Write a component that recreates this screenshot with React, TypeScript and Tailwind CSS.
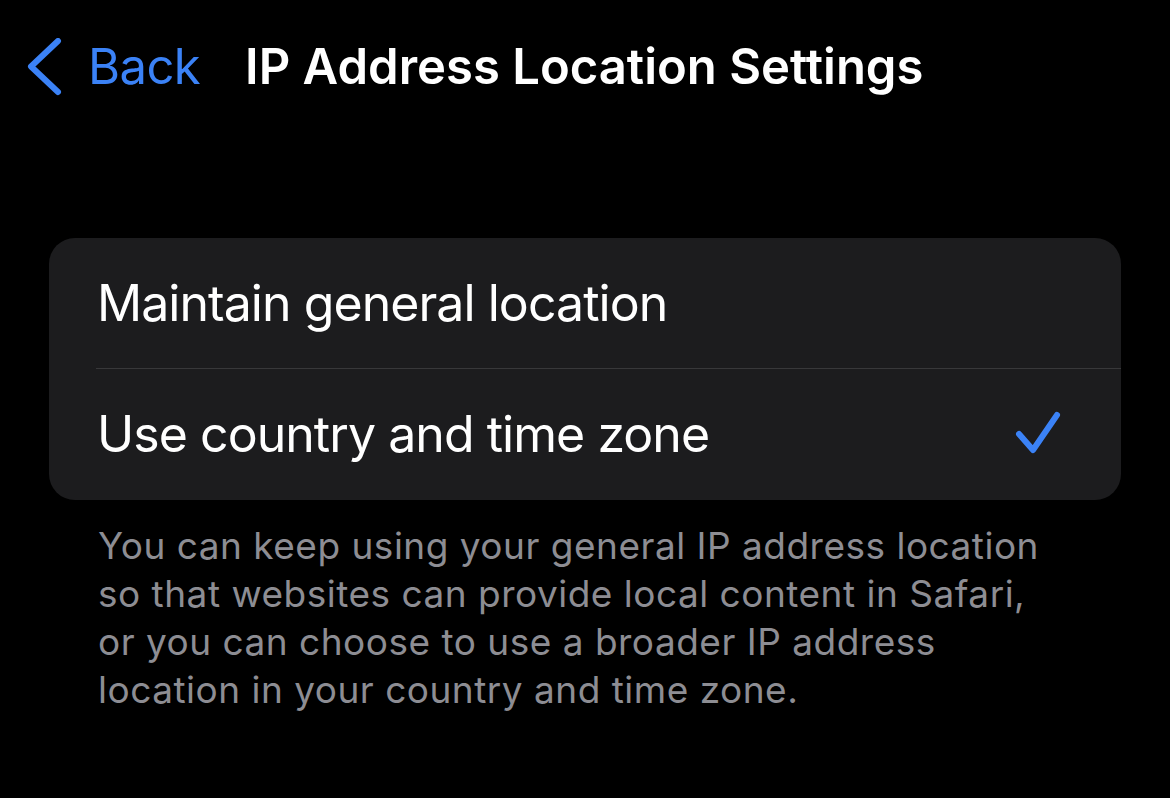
export default function App() {
  return (
    <div
      className="h-[798px] w-[1170px] overflow-hidden bg-black text-white"
      style={{ fontFamily: 'Inter, "Liberation Sans", sans-serif' }}
    >
      <header className="flex h-[134px] items-start pt-[38px]">
        <button type="button" className="ml-[26px] flex items-center text-[#3b82f6]">
          <svg width="36" height="58" viewBox="0 0 36 58" fill="none">
            <path d="M32 3 L5 28.5 L32 54" stroke="currentColor" strokeWidth="6" strokeLinecap="round" strokeLinejoin="round" />
          </svg>
          <span className="ml-[26px] text-[49px] leading-[58px] tracking-[-0.6px]">Back</span>
        </button>
        <h1 className="ml-[45px] text-[49px] font-semibold leading-[58px] tracking-[0px]">
          IP Address Location Settings
        </h1>
      </header>

      <div className="px-[49px] pt-[104px]">
        <div className="overflow-hidden rounded-[26px] bg-[#1c1c1e]">
          <div className="flex h-[130px] items-center pl-[48px] text-[50px] tracking-[-0.95px]">
            Maintain general location
          </div>
          <div className="ml-[47px] h-px bg-[#38383a]" />
          <div className="flex h-[131px] items-center justify-between pl-[48px] pr-[58px] text-[50px] tracking-[-0.95px]">
            <span>Use country and time zone</span>
            <svg width="48" height="48" viewBox="0 0 48 48" fill="none" className="text-[#3b82f6]">
              <path d="M4 23 L18 39 L42 4" stroke="currentColor" strokeWidth="6" strokeLinecap="round" strokeLinejoin="round" />
            </svg>
          </div>
        </div>
        <p className="mt-[22px] pl-[49px] pr-[30px] text-[37px] leading-[48px] tracking-[0.5px] text-[#8d8d93]">
          You can keep using your general IP address location
          <br />
          so that websites can provide local content in Safari,
          <br />
          or you can choose to use a broader IP address
          <br />
          location in your country and time zone.
        </p>
      </div>
    </div>
  );
}
